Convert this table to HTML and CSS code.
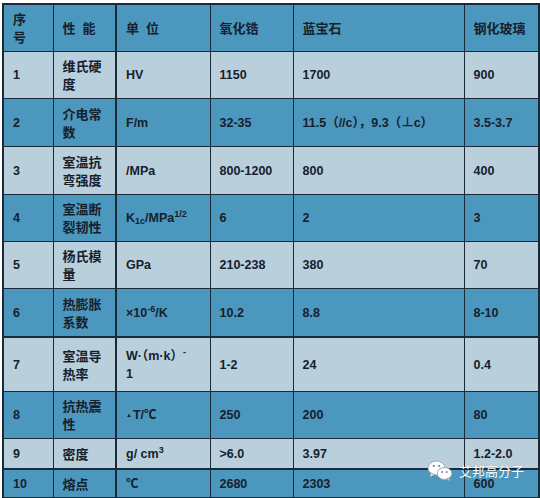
FILE: index.html
```html
<!DOCTYPE html>
<html lang="zh">
<head>
<meta charset="utf-8">
<link rel="stylesheet" href="styles.css">
</head>
<body>
<div class="wrap">
<table class="props">
  <colgroup>
    <col class="c1"><col class="c2"><col class="c3"><col class="c4"><col class="c5"><col class="c6">
  </colgroup>
  <tr class="dark h47">
    <td>序<br>号</td><td><span class="sp">性 能</span></td><td><span class="sp">单 位</span></td><td>氧化锆</td><td>蓝宝石</td><td>钢化玻璃</td>
  </tr>
  <tr class="light h47">
    <td>1</td><td>维氏硬<br>度</td><td>HV</td><td>1150</td><td>1700</td><td>900</td>
  </tr>
  <tr class="dark h48">
    <td>2</td><td>介电常<br>数</td><td>F/m</td><td>32-35</td><td>11.5（//c），9.3（⊥c）</td><td>3.5-3.7</td>
  </tr>
  <tr class="light h48">
    <td>3</td><td>室温抗<br>弯强度</td><td>/MPa</td><td>800-1200</td><td>800</td><td>400</td>
  </tr>
  <tr class="dark h47">
    <td>4</td><td>室温断<br>裂韧性</td><td>K<sub>1c</sub>/MPa<sup>1/2</sup></td><td>6</td><td>2</td><td>3</td>
  </tr>
  <tr class="light h47">
    <td>5</td><td>杨氏模<br>量</td><td>GPa</td><td>210-238</td><td>380</td><td>70</td>
  </tr>
  <tr class="dark h48 thick">
    <td>6</td><td>热膨胀<br>系数</td><td>×10<sup>-6</sup>/K</td><td>10.2</td><td>8.8</td><td>8-10</td>
  </tr>
  <tr class="light h54">
    <td>7</td><td>室温导<br>热率</td><td>W·（m·k）<sup>-</sup><br>1</td><td>1-2</td><td>24</td><td>0.4</td>
  </tr>
  <tr class="dark h47">
    <td>8</td><td>抗热震<br>性</td><td><span class="tri">▲</span>T/℃</td><td>250</td><td>200</td><td>80</td>
  </tr>
  <tr class="light h30 thick">
    <td>9</td><td>密度</td><td>g/ cm<sup>3</sup></td><td>&gt;6.0</td><td>3.97</td><td>1.2-2.0</td>
  </tr>
  <tr class="dark h28">
    <td>10</td><td>熔点</td><td>℃</td><td>2680</td><td>2303</td><td class="low">600</td>
  </tr>
</table>
<div class="mark">
  <svg class="wx" width="26" height="21" viewBox="0 0 26 21">
    <ellipse cx="9.5" cy="8" rx="8.5" ry="7" fill="#fff" stroke="#9aa7b0" stroke-width="1"/>
    <path d="M4 13 L3 17 L7.5 14.5 Z" fill="#fff" stroke="#9aa7b0" stroke-width="1"/>
    <circle cx="6.8" cy="6" r="1.1" fill="#6f7e88"/>
    <circle cx="12.2" cy="6" r="1.1" fill="#6f7e88"/>
    <ellipse cx="17.5" cy="13.5" rx="7.3" ry="6" fill="#fff" stroke="#9aa7b0" stroke-width="1"/>
    <path d="M21.5 18 L23 20.5 L19 19.2 Z" fill="#fff" stroke="#9aa7b0" stroke-width="1"/>
    <circle cx="15.2" cy="12" r="0.9" fill="#6f7e88"/>
    <circle cx="19.8" cy="12" r="0.9" fill="#6f7e88"/>
  </svg>
  <span class="mark-text">艾邦高分子</span>
</div>
</div>
</body>
</html>
```
FILE: styles.css
```css
html, body {
  margin: 0;
  padding: 0;
  background: #ffffff;
}
.wrap {
  position: relative;
  width: 540px;
  height: 498px;
  padding: 3px 0 0 2px;
  box-sizing: border-box;
}
.props {
  width: 536px;
  table-layout: fixed;
  border-collapse: collapse;
  border: 2px solid #1b2a38;
  font-family: "Liberation Sans", "Noto Sans CJK SC", sans-serif;
  font-weight: bold;
  font-size: 12.5px;
  color: #15212d;
}
.c1 { width: 50px; }
.c2 { width: 63px; }
.c3 { width: 94px; }
.c4 { width: 83px; }
.c5 { width: 171px; }
.c6 { width: 75px; }
.props td {
  border: 1px solid #1b2a38;
  padding: 0 4px 0 9px;
  vertical-align: middle;
  line-height: 18px;
  font-family: "Liberation Sans", "Noto Sans CJK SC", sans-serif;
}
.props td:nth-child(2) {
  font-size: 13px;
  font-family: "Noto Sans CJK SC", sans-serif;
  font-weight: 700;
}
.props tr:first-child td {
  font-size: 13px;
  font-family: "Noto Sans CJK SC", sans-serif;
}
.sp {
  word-spacing: 4px;
}
.props td:nth-child(3) {
  border-left: 2px solid #1b2a38;
}
.dark td { background: #4c97bd; }
.light td { background: #b9cfdc; }
.h47 td { height: 46px; }
.h48 td { height: 47px; }
.h54 td { height: 53px; }
.h30 td { height: 29px; }
.h28 td { height: 27px; }
.thick td { border-bottom: 2px solid #1b2a38; }
.props sup, .props sub {
  font-size: 9px;
  line-height: 0;
}
.props sup { vertical-align: 5px; }
.props sub { vertical-align: -2px; }
.tri {
  font-size: 6px;
  vertical-align: 2px;
  margin-right: 1px;
}
.low {
  padding-top: 6px;
}
.mark {
  position: absolute;
  left: 427px;
  top: 460px;
  display: flex;
  align-items: center;
  gap: 6px;
}
.mark-text {
  font-family: "Noto Sans CJK SC", sans-serif;
  font-size: 13px;
  color: #ffffff;
  text-shadow: 0 0 1px rgba(0,0,0,0.25);
}
```
